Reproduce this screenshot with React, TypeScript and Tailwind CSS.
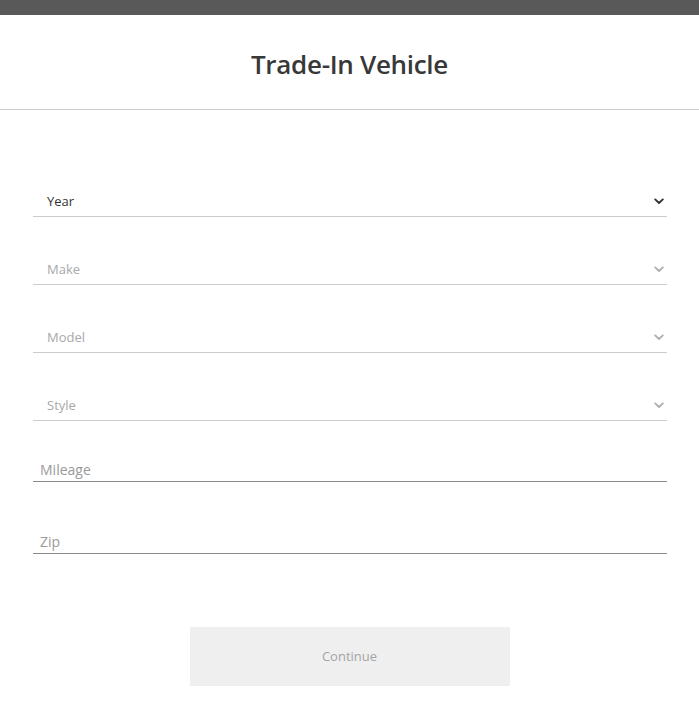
import React from "react";

const Chevron: React.FC<{ dark?: boolean }> = ({ dark }) => (
  <svg width="10" height="7" viewBox="0 0 10 7" fill="none" className={dark ? "text-[#333]" : "text-[#b0b0b0]"}>
    <path d="M1.2 1.4 L5 5 L8.8 1.4" stroke="currentColor" strokeWidth="1.9" strokeLinecap="round" strokeLinejoin="round" />
  </svg>
);

export default function App() {
  const selects = [
    { label: "Year", active: true },
    { label: "Make", active: false },
    { label: "Model", active: false },
    { label: "Style", active: false },
  ];

  return (
    <div className="min-h-[724px] w-[699px] bg-white font-['Open_Sans',sans-serif]">
      <div className="h-[15px] bg-[#595959]" />
      <div className="h-[95px] flex items-center justify-center border-b border-[#cfcfcf]">
        <h1 className="text-[26px] font-semibold text-[#383838] tracking-[-0.3px] mt-[4px]">Trade-In Vehicle</h1>
      </div>

      <div className="px-[33px] pt-[77px] pr-[32px]">
        {selects.map((s, i) => (
          <div
            key={s.label}
            className={`h-[30px] flex items-center justify-between pl-[14px] pr-[3px] border-b border-[#cccccc] ${i > 0 ? "mt-[38px]" : ""}`}
          >
            <span className={`text-[13px] ${s.active ? "text-[#333]" : "text-[#a8a8a8]"}`}>{s.label}</span>
            <Chevron dark={s.active} />
          </div>
        ))}

        <div className="mt-[37px] h-[24px] flex items-center pl-[7px] border-b border-[#8a8a8a]">
          <span className="text-[14px] text-[#9a9a9a]">Mileage</span>
        </div>
        <div className="mt-[48px] h-[24px] flex items-center pl-[7px] border-b border-[#8a8a8a]">
          <span className="text-[14px] text-[#9a9a9a]">Zip</span>
        </div>

        <div className="flex justify-center mt-[73px] pr-[1px]">
          <button className="w-[320px] h-[59px] bg-[#efefef] text-[13px] text-[#a5a5a5]">Continue</button>
        </div>
      </div>
    </div>
  );
}
